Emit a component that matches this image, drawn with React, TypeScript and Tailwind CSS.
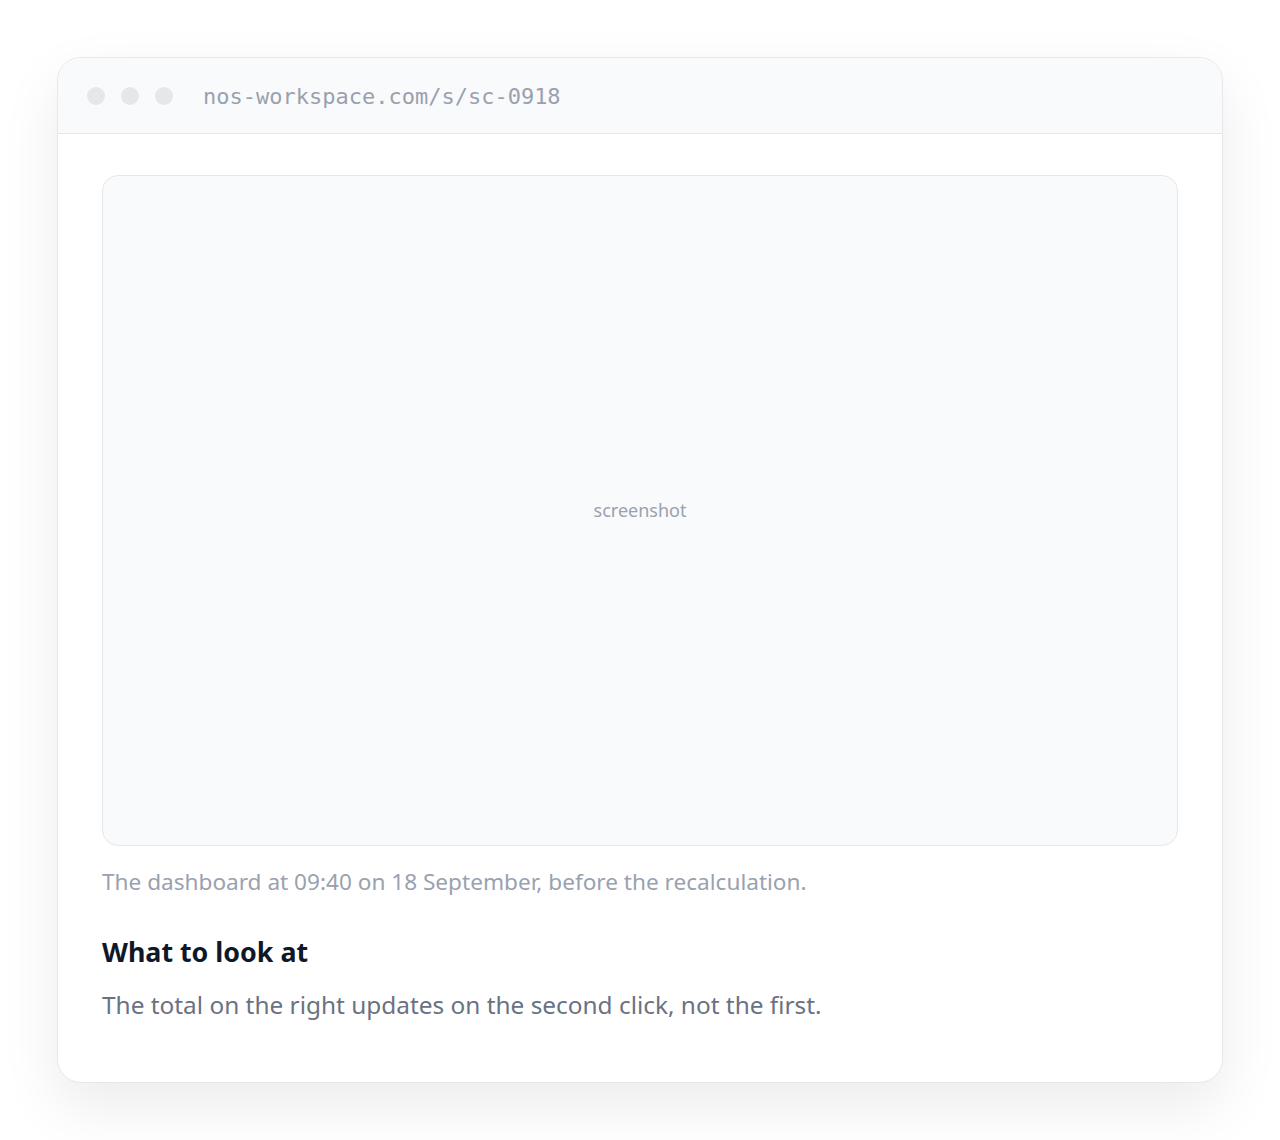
export default function App() {
  return (
    <div className="min-h-[1140px] bg-white px-[57px] pt-[57px] font-['Noto_Sans',sans-serif]">
      <div className="overflow-hidden rounded-[24px] border border-gray-200 bg-white shadow-[0_24px_60px_rgba(0,0,0,0.08)]">
        {/* Title bar */}
        <div className="flex h-[76px] items-center border-b border-gray-200 bg-gray-50 pl-[29px]">
          <div className="flex gap-[16px]">
            <span className="h-[18px] w-[18px] rounded-full bg-gray-200" />
            <span className="h-[18px] w-[18px] rounded-full bg-gray-200" />
            <span className="h-[18px] w-[18px] rounded-full bg-gray-200" />
          </div>
          <span className="ml-[30px] pt-[2px] font-['DejaVu_Sans_Mono',monospace] text-[22px] text-gray-400">
            nos-workspace.com/s/sc-0918
          </span>
        </div>

        {/* Body */}
        <div className="px-[44px] pt-[41px] pb-[60px]">
          <div className="flex h-[671px] items-center justify-center rounded-[16px] border border-gray-200 bg-gray-50">
            <span className="text-[18px] text-gray-400">screenshot</span>
          </div>
          <p className="mt-[20px] text-[22.6px] leading-[32px] text-gray-400">
            The dashboard at 09:40 on 18 September, before the recalculation.
          </p>
          <h2 className="mt-[36px] text-[26.8px] font-bold leading-[36px] text-gray-900">What to look at</h2>
          <p className="mt-[18px] text-[24.4px] leading-[34px] text-gray-500">
            The total on the right updates on the second click, not the first.
          </p>
        </div>
      </div>
    </div>
  )
}
